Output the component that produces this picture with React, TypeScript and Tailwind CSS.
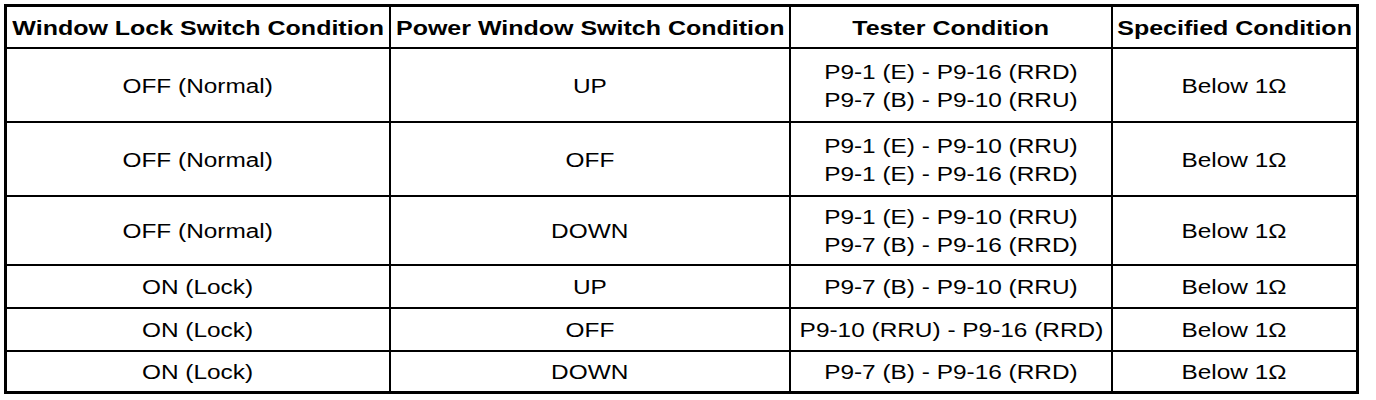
import React from "react";

type Row = { lock: string; sw: string; tester: string[]; spec: string; h: string };

const rows: Row[] = [
  { lock: "OFF (Normal)", sw: "UP", tester: ["P9-1 (E) - P9-16 (RRD)", "P9-7 (B) - P9-10 (RRU)"], spec: "Below 1Ω", h: "h-[74px]" },
  { lock: "OFF (Normal)", sw: "OFF", tester: ["P9-1 (E) - P9-10 (RRU)", "P9-1 (E) - P9-16 (RRD)"], spec: "Below 1Ω", h: "h-[74px]" },
  { lock: "OFF (Normal)", sw: "DOWN", tester: ["P9-1 (E) - P9-10 (RRU)", "P9-7 (B) - P9-16 (RRD)"], spec: "Below 1Ω", h: "h-[69px]" },
  { lock: "ON (Lock)", sw: "UP", tester: ["P9-7 (B) - P9-10 (RRU)"], spec: "Below 1Ω", h: "h-[43px]" },
  { lock: "ON (Lock)", sw: "OFF", tester: ["P9-10 (RRU) - P9-16 (RRD)"], spec: "Below 1Ω", h: "h-[43px]" },
  { lock: "ON (Lock)", sw: "DOWN", tester: ["P9-7 (B) - P9-16 (RRD)"], spec: "Below 1Ω", h: "h-[39px]" },
];

function Cell({ lines, last, bottom, h, bold }: { lines: string[]; last?: boolean; bottom?: boolean; h: string; bold?: boolean }) {
  return (
    <div
      className={`${h} flex items-center justify-center text-center border-black ${last ? "" : "border-r-2"} ${bottom ? "" : "border-b-2"}`}
    >
      {bold ? (
        <div className="inline-block scale-x-[1.19] whitespace-nowrap leading-[28px] pt-[1px] font-bold text-[21px]">
          {lines.map((l, i) => (
            <div key={i}>{l}</div>
          ))}
        </div>
      ) : (
        <div className="inline-block scale-x-[1.22] whitespace-nowrap leading-[28px] pt-[1px]">
          {lines.map((l, i) => (
            <div key={i}>{l}</div>
          ))}
        </div>
      )}
    </div>
  );
}

export default function App() {
  return (
    <div className="w-[1376px] h-[400px] bg-white pt-[4px] pl-[4px] text-black text-[20px]" style={{ fontFamily: '"Liberation Sans", Arial, sans-serif' }}>
      <div className="w-[1355px] border-[3px] border-black grid grid-cols-[384px_400px_322px_243px]">
        <Cell lines={["Window Lock Switch Condition"]} h="h-[42px]" bold />
        <Cell lines={["Power Window Switch Condition"]} h="h-[42px]" bold />
        <Cell lines={["Tester Condition"]} h="h-[42px]" bold />
        <Cell lines={["Specified Condition"]} h="h-[42px]" bold last />
        {rows.map((r, i) => {
          const b = i === rows.length - 1;
          return (
            <React.Fragment key={i}>
              <Cell lines={[r.lock]} h={r.h} bottom={b} />
              <Cell lines={[r.sw]} h={r.h} bottom={b} />
              <Cell lines={r.tester} h={r.h} bottom={b} />
              <Cell lines={[r.spec]} h={r.h} bottom={b} last />
            </React.Fragment>
          );
        })}
      </div>
    </div>
  );
}
